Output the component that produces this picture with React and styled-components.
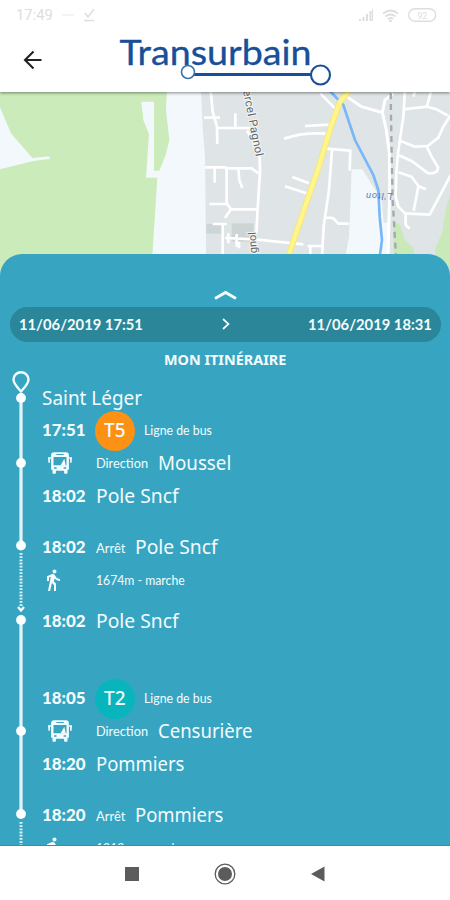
import React, { useLayoutEffect, useRef, useState } from 'react'
import styled, { createGlobalStyle } from 'styled-components';
import { MdDirectionsWalk } from 'react-icons/md';

const GlobalStyle = createGlobalStyle`
  * { box-sizing: border-box; }
  body {
    margin: 0;
    background: #fff;
    overflow: hidden;
    font-family: Lato, sans-serif;
  }
`;

const Screen = styled.div`
  width: 450px;
  height: 900px;
  display: flex;
  flex-direction: column;
  overflow: hidden;
  background: #fff;
`;

const StatusBar = styled.div`
  height: 28px;
  padding: 2px 13px 0 16px;
  display: flex;
  align-items: center;
  justify-content: space-between;
  color: #dedede;
  font: 14px Roboto, sans-serif;
`;

const StatusGroup = styled.div`
  display: flex;
  align-items: center;
  gap: 9px;
`;

const Header = styled.header`
  height: 64px;
  flex: none;
  display: flex;
  align-items: center;
  padding-left: 23px;
  gap: 76px;
  position: relative;
  z-index: 1;
  box-shadow: 0 1px 3px rgba(0, 0, 0, 0.45);
  clip-path: inset(0 0 -6px 0);
`;

const MapArea = styled.div`
  height: 184px;
  flex: none;
  svg { display: block; }
`;

const Panel = styled.section`
  height: 592px;
  flex: none;
  margin-top: -22px;
  display: flex;
  flex-direction: column;
  background: #37a5c1;
  border-radius: 22px 22px 0 0;
  border-bottom: 1px solid #1b9cb4;
  overflow: hidden;
  color: #f4fcff;
  z-index: 1;
`;

const Handle = styled.div`
  height: 53px;
  flex: none;
  display: flex;
  justify-content: center;
  padding-top: 35px;
`;

const DateBar = styled.div`
  height: 35px;
  flex: none;
  margin: 0 9px 0 10px;
  padding: 0 9px 1px;
  border-radius: 18px;
  background: #2a8698;
  display: flex;
  align-items: center;
  justify-content: space-between;
  font-size: 15px;
  font-weight: 700;
`;

const PanelTitle = styled.h1`
  margin: 0;
  height: 29px;
  flex: none;
  padding-top: 7px;
  display: flex;
  justify-content: center;
  font: 700 15px/21px "Noto Sans", sans-serif;
`;

const Itinerary = styled.div`
  display: flex;
  flex: 1;
  min-height: 0;
`;

const RailColumn = styled.div`
  width: 42px;
  flex: none;
  overflow: hidden;
  svg { display: block; }
`;

const Steps = styled.div`
  padding-top: 10px;
  flex: 1;
`;

const Row = styled.div`
  height: 33px;
  margin-top: ${({ $space }) => $space || 0}px;
  display: flex;
  align-items: center;
`;

const Lead = styled.div`
  width: 54px;
  flex: none;
  padding-left: ${({ $indent }) => $indent || 0}px;
  padding-bottom: ${({ $lift }) => $lift || 0}px;
  display: flex;
  font-size: 16.5px;
  font-weight: 900;
`;

const WalkIcon = styled(MdDirectionsWalk)`
  width: 24px;
  height: 24px;
  margin-left: -1px;
`;

const Label = styled.span`
  margin-right: 10px;
  font-size: 12.5px;
  padding-top: ${({ $drop }) => $drop || 0}px;
`;

const Place = styled.span`
  padding-bottom: ${({ $lift }) => $lift || 0}px;
  font: 19.5px/26px "Noto Sans", sans-serif;
`;

const Badge = styled.div`
  width: 40px;
  height: 40px;
  margin: -4px 9px -4px -1px;
  padding-bottom: 1px;
  flex: none;
  border-radius: 50%;
  background: ${({ $color }) => $color};
  display: flex;
  align-items: center;
  justify-content: center;
  font: 500 19px "Noto Sans", sans-serif;
`;

const NavBar = styled.nav`
  flex: 1;
  padding: 1px 125px 0;
  display: flex;
  align-items: center;
  justify-content: space-between;
`;

const FitBox = styled.span`
  display: block;
  width: ${({ $width }) => $width}px;
  white-space: nowrap;
`;

const FitText = styled.span`
  display: inline-block;
  transform-origin: left center;
`;

// squeezes or stretches a label so it takes exactly the given width
const Fit = ({ width, children }) => {
    const ref = useRef(null);
    const [scale, setScale] = useState(1);

    useLayoutEffect(() => {
        setScale(width / ref.current.offsetWidth)
    }, [width, children])

    return (
        <FitBox $width={width}>
            <FitText ref={ref} style={{ transform: `scaleX(${scale})` }}>{children}</FitText>
        </FitBox>
    )
}

const BusIcon = () => (
    <svg width="24" height="22" viewBox="0 0 24 22" fill="#f4fcff">
        <path fillRule="evenodd" d="M6 .3h12q2.900 0 2.900 2.900v14.600h-1.400V21q0 .8-.8.8h-1.800q-.8 0-.8-.8v-2.200H7.900V21q0 .8-.8.8H5.300q-.8 0-.8-.8v-3.200H3.100V3.200Q3.100.3 6 .3zM8.300 1.900v1h7.500v-1zM5.500 4.900v8.300h13V4.900zM6 15.200v1.500h2.600v-1.500zm9.600 0v1.500h2.600v-1.500z" />
        <path d="M12.500 13.500l3.800-6.800 1.500 6.800z" />
        <path d="M0 5.300h3v1.500H1.900v4H.4zM24 5.300h-3v1.500h1.100v4h1.500z" />
    </svg>
)

const Logo = () => (
    <svg width="215" height="56" viewBox="118 31 215 56">
        <text x="119.500" y="64.300" textLength="192" lengthAdjust="spacingAndGlyphs" fontFamily="Lato, sans-serif" fontSize="35" fill="#17509a" stroke="#17509a" strokeWidth=".35">Transurbain</text>
        <path d="M194 73.600H312" stroke="#17509a" strokeWidth="3" />
        <circle cx="188" cy="71" r="6.500" fill="#fff" stroke="#3c71ab" strokeWidth="1.600" />
        <circle cx="320.500" cy="74" r="9.500" fill="#fff" stroke="#17509a" strokeWidth="2.100" />
    </svg>
)

const CityMap = () => (
    <svg width="450" height="184" viewBox="0 92 450 184">
        <rect y="90" width="450" height="190" fill="#dfe4e6" />
        <g transform="translate(0 90) scale(.33333)">
            <path d="M0 0H603L608 110 615 200 619 560H0z" fill="#f3f8fc" />
            <path d="M0 0H501L498 60 508 150 497 195 478 242H462V35H424L430 90 447 133 438 263H472L453 560H0V238L100 213 150 207 147 199 97 204 33 130 0 52z" fill="#cbebbb" />
            <path d="M619 402h50v29h-50z" fill="#ccd5d7" />
            <g fill="none" stroke="#fff" strokeWidth="8">
                <path d="M632 0L638 65 651 110 652 162M612 83H660M651 114H682M615 232H680M644 232V278M628 342H680M638 402H680M668 402V500" />
            </g>
        </g>
        <g transform="translate(225 90) scale(.33333)">
            <path d="M380 238H412L470 330 476 398H489V560H350L372 440z" fill="#f3f8fc" />
            <path d="M505 390L525 405 540 450 566 475 570 560H505zM680 305L665 345 651 430 630 475 640 560H680z" fill="#c9e9b9" />
            <path d="M20 400H86V455H20z" fill="#ccd5d4" />
            <g fill="none" stroke="#fff" strokeWidth="8" strokeLinejoin="round">
                <path d="M0 114H72L84 130M31 70V112M66 122L95 170 104 205 105 245 98 355 94 430M0 235H80L100 250M40 235L43 270 52 294M5 235V340L18 358H98M18 358L0 384M0 444L90 448 235 463M10 430V460M35 432V470M42 455V475" />
                <path d="M240 108L312 104M177 146Q235 126 302 131M202 261L252 280M180 289L244 310M286 10L330 55" />
                <path d="M303 176L376 182 374 242M321 180L312 300 296 410 290 520M304 383L324 384 340 401H371M248 468H293M256 465V500" />
                <path d="M362 18L410 50 472 68 484 120 493 190 494 300 489 500M505 10L480 30 472 68" strokeWidth="9" />
                <path d="M540 0L535 80 519 190 514 250 512 320 520 350 540 370 614 374 640 325 680 250M535 58L606 50 635 58 668 77M619 0L606 50M565 20L572 0M680 70L655 110 640 143 608 168 570 170 527 153M604 168L620 200 639 232Q640 252 610 250L560 213 522 196M520 247L560 260 580 288 602 298M580 290L566 362M542 370V405L554 416" />
            </g>
            <path d="M497 10L500 190 503 330 513 500" fill="none" stroke="#a4a9ac" strokeWidth="7" strokeDasharray="18 14" />
            <path d="M312 0L355 45 390 150 445 255 460 300 464 380 471 450 463 510" fill="none" stroke="#78b7f8" strokeWidth="8" />
            <path d="M375 0L345 35 317 112 280 235 235 365 183 520" fill="none" stroke="#f1e77b" strokeWidth="18" />
            <path d="M375 0L345 35 317 112 280 235 235 365 183 520" fill="none" stroke="#fff58a" strokeWidth="13" />
        </g>
        <g fontFamily="Roboto, sans-serif" fill="#626669" stroke="#f4f6f6" strokeWidth="2" paintOrder="stroke">
            <text transform="translate(243 91) rotate(79)" fontSize="11.500" textLength="67">ercel Pagnol</text>
            <text transform="translate(257 253) rotate(-94)" fontSize="11">gnol</text>
            <text transform="translate(392 193) rotate(180)" fontSize="9.500" fontStyle="italic" fill="#4f7cc4" stroke="none" textLength="26">L'Iton</text>
        </g>
    </svg>
)

// y positions are counted from the top of the pin
const stops = [27, 92, 174.5, 249, 360, 443];

const Rail = () => (
    <svg width="42" height="475" viewBox="0 0 42 475">
        <path d="M21 22V174M21 249V443" stroke="#e4f5fa" strokeWidth="3.200" />
        <path d="M21 182V235M21 451V475" stroke="#d9f2f8" strokeWidth="3" strokeDasharray="1.800 1.400" />
        <path d="M21 20.500Q13.500 12.500 13.500 8.500a7.500 7.200 0 0 1 15 0Q28.500 12.500 21 20.500z" fill="none" stroke="#f4fcff" strokeWidth="2.400" />
        <path d="M18 236l3 3.500 3-3.500" fill="none" stroke="#f4fcff" strokeWidth="2.400" />
        {stops.map((y) => <circle key={y} cx="21" cy={y} r="4.900" fill="#fff" />)}
    </svg>
)

const steps = [
    { place: 'Saint Léger', placeWidth: 100 },
    { time: '17:51', line: 'T5', color: '#fd9114', label: 'Ligne de bus', labelWidth: 68 },
    { icon: 'bus', label: 'Direction', labelWidth: 52, place: 'Moussel', placeWidth: 73 },
    { time: '18:02', place: 'Pole Sncf', placeWidth: 83 },
    { space: 18, time: '18:02', label: 'Arrêt', labelWidth: 29, place: 'Pole Sncf', placeWidth: 83 },
    { icon: 'walk', label: '1674m - marche', labelWidth: 89 },
    { space: 8, time: '18:02', place: 'Pole Sncf', placeWidth: 83 },
    { space: 44, time: '18:05', line: 'T2', color: '#08b5bd', label: 'Ligne de bus', labelWidth: 68 },
    { icon: 'bus', label: 'Direction', labelWidth: 52, place: 'Censurière', placeWidth: 95 },
    { time: '18:20', place: 'Pommiers', placeWidth: 88 },
    { space: 18, time: '18:20', label: 'Arrêt', labelWidth: 29, place: 'Pommiers', placeWidth: 88 },
    { icon: 'walk', label: '1212m - marche', labelWidth: 89 },
];

const Step = ({ step }) => (
    <Row $space={step.space}>
        {step.time && <Lead $lift={step.label === 'Arrêt' ? 2 : 1}><Fit width={44}>{step.time}</Fit></Lead>}
        {step.icon === 'bus' && <Lead $indent={6} $lift={2}><BusIcon /></Lead>}
        {step.icon === 'walk' && <Lead $lift={2}><WalkIcon /></Lead>}
        {step.line && <Badge $color={step.color}><Fit width={22}>{step.line}</Fit></Badge>}
        {step.label && <Label $drop={step.label === 'Arrêt' ? 2 : 0}><Fit width={step.labelWidth}>{step.label}</Fit></Label>}
        {step.place && <Place $lift={step.label || step.time ? 1 : 0}><Fit width={step.placeWidth}>{step.place}</Fit></Place>}
    </Row>
)

export default function App() {
    return (
        <>
            <GlobalStyle />
            <Screen>
                <StatusBar>
                    <StatusGroup>
                        <Fit width={37}>17:49</Fit>
                        <svg width="12" height="4"><path d="M0 2h12" stroke="#f4f4f4" strokeWidth="2" /></svg>
                        <svg width="12" height="14" fill="none" stroke="#dedede" strokeWidth="1.500"><path d="M2 5l3 4 6-8M1 12.500h10" /></svg>
                    </StatusGroup>
                    <StatusGroup>
                        <svg width="14" height="12" stroke="#dedede" strokeWidth="2"><path d="M1 12V10M4.500 12V8M8 12V5M11.500 12V2" /><path d="M13.500 12V0" strokeWidth="1" /></svg>
                        <svg width="17" height="13" fill="none" stroke="#dedede" strokeWidth="1.800"><path d="M1 4.500q7.500-6 15 0M3.500 7.500q5-4 10 0M6 10q2.500-2 5 0" /><circle cx="8.500" cy="12" r=".6" /></svg>
                        <svg width="29" height="14"><rect x=".7" y=".7" width="27" height="12.500" rx="6.200" fill="none" stroke="#dedede" strokeWidth="1.400" /><text x="14.200" y="10.500" textAnchor="middle" fontSize="9" fill="#dedede">92</text></svg>
                    </StatusGroup>
                </StatusBar>
                <Header>
                    <svg width="19" height="20" fill="none" stroke="#222" strokeWidth="2.100"><path d="M10.500 1.500L2 10l8.500 8.500M2 10h16.500" /></svg>
                    <Logo />
                </Header>
                <MapArea><CityMap /></MapArea>
                <Panel>
                    <Handle>
                        <svg width="25" height="12" fill="none" stroke="#f4fcff" strokeWidth="3"><path d="M2 9.500l10.500-6 10.500 6" /></svg>
                    </Handle>
                    <DateBar>
                        <Fit width={124}>11/06/2019 17:51</Fit>
                        <svg width="8" height="12" fill="none" stroke="#f4fcff" strokeWidth="1.700"><path d="M1 1l5.500 5L1 11" /></svg>
                        <Fit width={124}>11/06/2019 18:31</Fit>
                    </DateBar>
                    <PanelTitle><Fit width={122}>MON ITINÉRAIRE</Fit></PanelTitle>
                    <Itinerary>
                        <RailColumn><Rail /></RailColumn>
                        <Steps>
                            {steps.map((step, i) => <Step step={step} key={i} />)}
                        </Steps>
                    </Itinerary>
                </Panel>
                <NavBar>
                    <svg width="14" height="14"><rect width="14" height="14" fill="#5c5c5c" /></svg>
                    <svg width="22" height="22"><circle cx="11" cy="11" r="9.800" fill="none" stroke="#5c5c5c" strokeWidth="1.300" /><circle cx="11" cy="11" r="7" fill="#5c5c5c" /></svg>
                    <svg width="14" height="16"><path d="M0 8L13.500 .5v15z" fill="#5c5c5c" /></svg>
                </NavBar>
            </Screen>
        </>
    )
}
